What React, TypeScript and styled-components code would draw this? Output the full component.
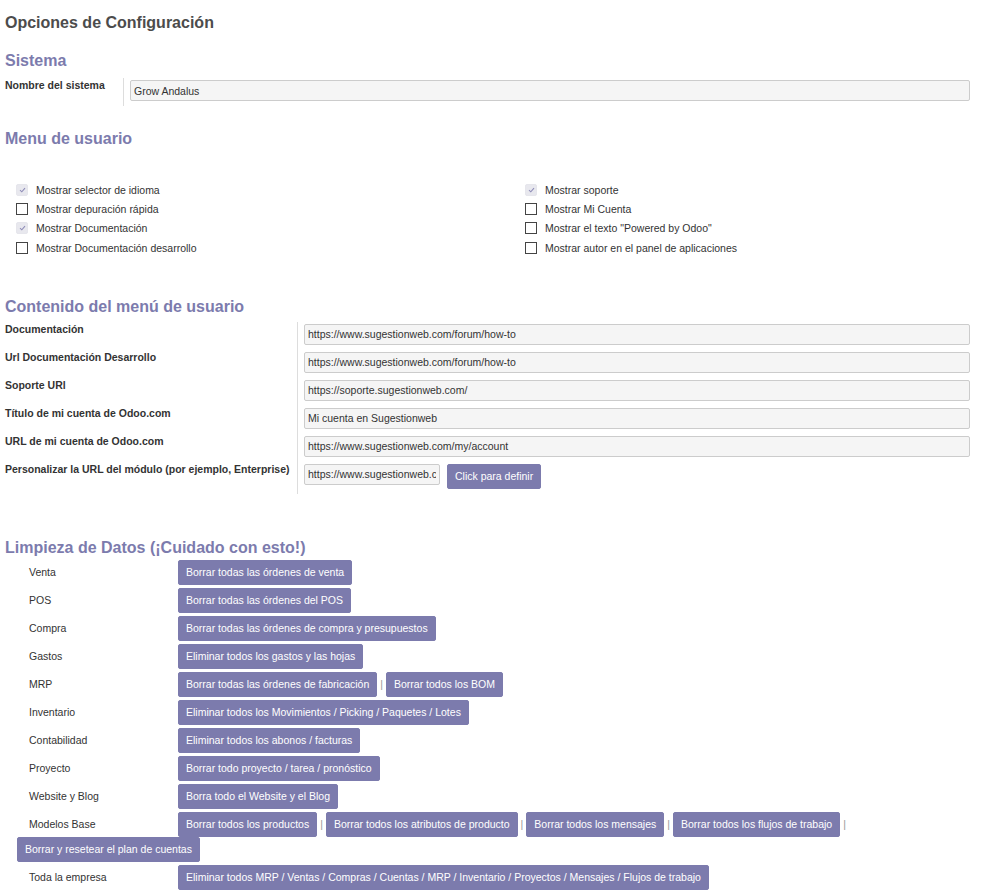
import React from 'react';
import styled, { createGlobalStyle } from 'styled-components';

const GlobalStyle = createGlobalStyle`
  body {
    margin: 0;
    background: #fff;
    font-family: "Liberation Sans", Arial, sans-serif;
    font-size: 10.5px;
    color: #333;
  }
`;

const accent = '#7c7bad';

const Page = styled.div`
  padding: 13px 13px 20px 5px;
`;

const Title = styled.h1`
  margin: 0;
  font-size: 16px;
  line-height: 20px;
  font-weight: bold;
  color: #4c4c4c;
`;

const SectionTitle = styled.h2<{ $top: number }>`
  margin: ${(p) => p.$top}px 0 0;
  font-size: 16px;
  line-height: 20px;
  font-weight: bold;
  color: ${accent};
`;

const FieldGroup = styled.div<{ $labelWidth: number; $top: number }>`
  display: grid;
  grid-template-columns: ${(p) => p.$labelWidth}px 1fr;
  margin-top: ${(p) => p.$top}px;
`;

const FieldLabel = styled.div`
  font-weight: bold;
  line-height: 14px;
  padding-top: 0;
  color: #333;
`;

const FieldCell = styled.div`
  display: flex;
  align-items: flex-start;
  gap: 7px;
  border-left: 1px solid #ddd;
  padding: 2px 0 5px 6px;
`;

const TextInput = styled.input<{ $width?: number }>`
  box-sizing: border-box;
  height: 21px;
  width: ${(p) => (p.$width ? `${p.$width}px` : '100%')};
  padding: 0 3px;
  border: 1px solid #ccc;
  border-radius: 2px;
  background: #f5f5f5;
  font-family: inherit;
  font-size: 10.5px;
  color: #333;
  outline: none;
`;

const Button = styled.button`
  box-sizing: border-box;
  height: 25px;
  padding: 0 7px;
  border: 1px solid ${accent};
  border-radius: 2px;
  background: ${accent};
  color: #fff;
  font-family: inherit;
  font-size: 10.5px;
  white-space: nowrap;
  cursor: pointer;
`;

const CheckGrid = styled.div`
  display: grid;
  grid-template-columns: 509px 1fr;
  grid-auto-rows: 19.4px;
  margin-top: 31px;
  padding-left: 11px;
`;

const CheckRow = styled.label`
  display: flex;
  align-items: center;
  gap: 8px;
  color: #333;
`;

const Box = styled.span<{ $checked?: boolean }>`
  box-sizing: border-box;
  display: inline-flex;
  align-items: center;
  justify-content: center;
  width: 12px;
  height: 12px;
  border: ${(p) => (p.$checked ? '1px solid #e6e6ec' : '1px solid #444')};
  border-radius: ${(p) => (p.$checked ? '2px' : '0')};
  background: ${(p) => (p.$checked ? '#e8e8ee' : '#fff')};
`;

const CleanList = styled.div`
  margin-top: 2px;
  padding-left: 12px;
`;

const CleanRow = styled.div`
  display: flex;
  flex-wrap: wrap;
  align-items: center;
  margin-bottom: 3px;
`;

const CleanLabel = styled.div`
  box-sizing: border-box;
  width: 161px;
  padding-left: 12px;
  color: #333;
`;

const Sep = styled.span`
  padding: 0 3px;
  color: #999;
`;

const Check = () => (
  <svg width="7" height="6" viewBox="0 0 7 6">
    <path d="M1 3.2 L2.8 4.8 L6 1.2" fill="none" stroke="#8f8db8" strokeWidth="1.1" />
  </svg>
);

const leftChecks: [string, boolean][] = [
  ['Mostrar selector de idioma', true],
  ['Mostrar depuración rápida', false],
  ['Mostrar Documentación', true],
  ['Mostrar Documentación desarrollo', false],
];

const rightChecks: [string, boolean][] = [
  ['Mostrar soporte', true],
  ['Mostrar Mi Cuenta', false],
  ['Mostrar el texto "Powered by Odoo"', false],
  ['Mostrar autor en el panel de aplicaciones', false],
];

const menuFields: [string, string][] = [
  ['Documentación', 'https://www.sugestionweb.com/forum/how-to'],
  ['Url Documentación Desarrollo', 'https://www.sugestionweb.com/forum/how-to'],
  ['Soporte URl', 'https://soporte.sugestionweb.com/'],
  ['Título de mi cuenta de Odoo.com', 'Mi cuenta en Sugestionweb'],
  ['URL de mi cuenta de Odoo.com', 'https://www.sugestionweb.com/my/account'],
];

const cleanRows: { label: string; actions: string[]; trailing?: string[] }[] = [
  { label: 'Venta', actions: ['Borrar todas las órdenes de venta'] },
  { label: 'POS', actions: ['Borrar todas las órdenes del POS'] },
  { label: 'Compra', actions: ['Borrar todas las órdenes de compra y presupuestos'] },
  { label: 'Gastos', actions: ['Eliminar todos los gastos y las hojas'] },
  { label: 'MRP', actions: ['Borrar todas las órdenes de fabricación', 'Borrar todos los BOM'] },
  { label: 'Inventario', actions: ['Eliminar todos los Movimientos / Picking / Paquetes / Lotes'] },
  { label: 'Contabilidad', actions: ['Eliminar todos los abonos / facturas'] },
  { label: 'Proyecto', actions: ['Borrar todo proyecto / tarea / pronóstico'] },
  { label: 'Website y Blog', actions: ['Borra todo el Website y el Blog'] },
  {
    label: 'Modelos Base',
    actions: [
      'Borrar todos los productos',
      'Borrar todos los atributos de producto',
      'Borrar todos los mensajes',
      'Borrar todos los flujos de trabajo',
    ],
    trailing: ['Borrar y resetear el plan de cuentas'],
  },
  {
    label: 'Toda la empresa',
    actions: ['Eliminar todos MRP / Ventas / Compras / Cuentas / MRP / Inventario / Proyectos / Mensajes / Flujos de trabajo'],
  },
];

const renderChecks = (items: [string, boolean][]) =>
  items.map(([text, checked]) => (
    <CheckRow key={text}>
      <Box $checked={checked}>{checked && <Check />}</Box>
      {text}
    </CheckRow>
  ));

export default function App() {
  return (
    <>
      <GlobalStyle />
      <Page>
        <Title>Opciones de Configuración</Title>

        <SectionTitle $top={18}>Sistema</SectionTitle>
        <FieldGroup $labelWidth={118} $top={7}>
          <FieldLabel>Nombre del sistema</FieldLabel>
          <FieldCell>
            <TextInput defaultValue="Grow Andalus" />
          </FieldCell>
        </FieldGroup>

        <SectionTitle $top={23}>Menu de usuario</SectionTitle>
        <CheckGrid>
          {leftChecks.map((l, i) => (
            <React.Fragment key={i}>
              {renderChecks([l])}
              {renderChecks([rightChecks[i]])}
            </React.Fragment>
          ))}
        </CheckGrid>

        <SectionTitle $top={39}>Contenido del menú de usuario</SectionTitle>
        <FieldGroup $labelWidth={292} $top={5}>
          {menuFields.map(([label, value]) => (
            <React.Fragment key={label}>
              <FieldLabel>{label}</FieldLabel>
              <FieldCell>
                <TextInput defaultValue={value} />
              </FieldCell>
            </React.Fragment>
          ))}
          <FieldLabel>Personalizar la URL del módulo (por ejemplo, Enterprise)</FieldLabel>
          <FieldCell>
            <TextInput $width={136} defaultValue="https://www.sugestionweb.com/" />
            <Button>Click para definir</Button>
          </FieldCell>
        </FieldGroup>

        <SectionTitle $top={44}>Limpieza de Datos (¡Cuidado con esto!)</SectionTitle>
        <CleanList>
          {cleanRows.map((row) => (
            <CleanRow key={row.label}>
              <CleanLabel>{row.label}</CleanLabel>
              {row.actions.map((a, i) => (
                <React.Fragment key={a}>
                  {i > 0 && <Sep>|</Sep>}
                  <Button>{a}</Button>
                </React.Fragment>
              ))}
              {row.trailing && <Sep>|</Sep>}
              {row.trailing && row.trailing.map((t) => <Button key={t}>{t}</Button>)}
            </CleanRow>
          ))}
        </CleanList>
      </Page>
    </>
  );
}
